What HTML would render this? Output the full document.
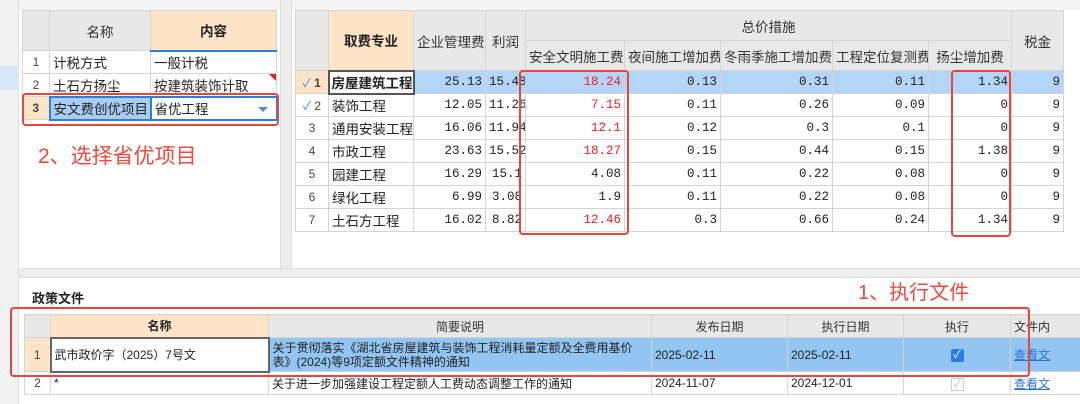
<!DOCTYPE html>
<html><head><meta charset="utf-8"><style>
*{margin:0;padding:0;box-sizing:border-box}
body{width:1080px;height:404px;overflow:hidden;background:#fff;font-family:"Liberation Sans","Noto Sans CJK SC",sans-serif;font-size:13.5px;color:#222;position:relative}
.a{position:absolute}
table{border-collapse:collapse;table-layout:fixed;position:absolute}
td{border:1px solid #d4d4d4;overflow:hidden;white-space:nowrap;padding:0 3px;height:23px}
.h{background:#e8e8e8;text-align:center;color:#333}
.p{background:#fde4c6;font-weight:bold;text-align:center}
.n{text-align:center;color:#444;font-size:12px}
.r{text-align:right;font-family:"Liberation Mono","Noto Sans CJK SC",monospace;font-size:12.5px}
.red{color:#f02020}
.sel td{background:#b4d5f7}
.box{position:absolute;border:2px solid #e8453c;border-radius:4px}
</style></head><body>
<div class="a" style="left:0;top:0;width:19px;height:404px;background:#f2f2f2;border-right:1px solid #ddd"></div>
<div class="a" style="left:0;top:66px;width:19px;height:24px;background:#d8e8fa"></div>
<div class="a" style="left:19px;top:0;width:1061px;height:10px;background:#f4f4f4"></div>
<div class="a" style="left:280px;top:0;width:12px;height:278px;background:#eeeeee;border-left:1px solid #ddd;border-right:1px solid #ddd"></div>
<div class="a" style="left:19px;top:268px;width:1061px;height:10px;background:#eeeeee;border-top:1px solid #ddd;border-bottom:1px solid #ddd"></div>

<table style="left:22px;top:10px;width:254px">
<col style="width:27px"><col style="width:101px"><col style="width:126px">
<tr style="height:40px"><td class="h">&nbsp;</td><td class="h">名称</td><td class="p" style="border-bottom:2px solid #2a7de1">内容</td></tr>
<tr><td class="n">1</td><td>计税方式</td><td>一般计税</td></tr>
<tr><td class="n">2</td><td>土石方扬尘</td><td style="position:relative">按建筑装饰计取<span class="a" style="right:0;top:0;width:0;height:0;border-left:7px solid transparent;border-top:7px solid #e02020"></span></td></tr>
<tr><td class="n" style="background:#fde4c6;font-weight:bold">3</td><td style="background:#a9cdf5;border:2px solid #2a7de1">安文费创优项目</td><td style="border:2px solid #2a7de1;position:relative">省优工程<span class="a" style="right:8px;top:9px;border-left:5px solid transparent;border-right:5px solid transparent;border-top:5px solid #5a8fc0"></span></td></tr>
</table>
<div class="box" style="left:22px;top:93px;width:257px;height:33px"></div>
<div class="a red" style="left:38px;top:140px;font-size:21px;color:#f0483c">2、选择省优项目</div>

<table style="left:295px;top:10px;width:768px">
<col style="width:33px"><col style="width:85px"><col style="width:72px"><col style="width:40px"><col style="width:99px"><col style="width:96px"><col style="width:112px"><col style="width:96px"><col style="width:83px"><col style="width:52px">
<tr style="height:30px"><td class="h" rowspan="2"></td><td class="p" rowspan="2">取费专业</td><td class="h" rowspan="2">企业管理费</td><td class="h" rowspan="2">利润</td><td class="h" colspan="5">总价措施</td><td class="h" rowspan="2">税金</td></tr>
<tr style="height:30px"><td class="h">安全文明施工费</td><td class="h">夜间施工增加费</td><td class="h">冬雨季施工增加费</td><td class="h">工程定位复测费</td><td class="h">扬尘增加费</td></tr>
<tr class="sel"><td class="n" style="background:#fde4c6"><span style="color:#3a8ee6">✓</span> <b>1</b></td><td style="background:#fff;border:2px solid #555;font-weight:bold;padding:0 2px">房屋建筑工程</td><td class="r">25.13</td><td class="r">15.48</td><td class="r red">18.24</td><td class="r">0.13</td><td class="r">0.31</td><td class="r">0.11</td><td class="r">1.34</td><td class="r">9</td></tr>
<tr><td class="n"><span style="color:#3a8ee6">✓</span> 2</td><td>装饰工程</td><td class="r">12.05</td><td class="r">11.26</td><td class="r red">7.15</td><td class="r">0.11</td><td class="r">0.26</td><td class="r">0.09</td><td class="r">0</td><td class="r">9</td></tr>
<tr><td class="n">3</td><td>通用安装工程</td><td class="r">16.06</td><td class="r">11.94</td><td class="r red">12.1</td><td class="r">0.12</td><td class="r">0.3</td><td class="r">0.1</td><td class="r">0</td><td class="r">9</td></tr>
<tr><td class="n">4</td><td>市政工程</td><td class="r">23.63</td><td class="r">15.52</td><td class="r red">18.27</td><td class="r">0.15</td><td class="r">0.44</td><td class="r">0.15</td><td class="r">1.38</td><td class="r">9</td></tr>
<tr><td class="n">5</td><td>园建工程</td><td class="r">16.29</td><td class="r">15.1</td><td class="r">4.08</td><td class="r">0.11</td><td class="r">0.22</td><td class="r">0.08</td><td class="r">0</td><td class="r">9</td></tr>
<tr><td class="n">6</td><td>绿化工程</td><td class="r">6.99</td><td class="r">3.08</td><td class="r">1.9</td><td class="r">0.11</td><td class="r">0.22</td><td class="r">0.08</td><td class="r">0</td><td class="r">9</td></tr>
<tr><td class="n">7</td><td>土石方工程</td><td class="r">16.02</td><td class="r">8.82</td><td class="r red">12.46</td><td class="r">0.3</td><td class="r">0.66</td><td class="r">0.24</td><td class="r">1.34</td><td class="r">9</td></tr>
</table>
<div class="box" style="left:519px;top:70px;width:110px;height:165px"></div>
<div class="box" style="left:951px;top:70px;width:60px;height:167px"></div>

<div class="a" style="left:32px;top:288px;font-size:13px;font-weight:bold">政策文件</div>
<div class="a" style="left:858px;top:276px;font-size:20px;color:#f0483c">1、执行文件</div>
<table style="left:24px;top:314px;width:1070px;font-size:12px">
<col style="width:26px"><col style="width:218px"><col style="width:383px"><col style="width:136px"><col style="width:116px"><col style="width:107px"><col style="width:84px">
<tr style="height:23px"><td class="h"></td><td class="p">名称</td><td class="h">简要说明</td><td class="h">发布日期</td><td class="h">执行日期</td><td class="h">执行</td><td class="h" style="text-align:left">文件内</td></tr>
<tr style="height:34px;background:#92c5f2"><td class="n" style="background:#fde4c6">1</td><td style="background:#fff;border:2px solid #666">武市政价字（2025）7号文</td><td style="white-space:normal;line-height:14px;font-size:12px">关于贯彻落实《湖北省房屋建筑与装饰工程消耗量定额及全费用基价表》(2024)等9项定额文件精神的通知</td><td>2025-02-11</td><td>2025-02-11</td><td style="text-align:center"><span style="display:inline-block;width:13px;height:13px;background:#2a7de1;color:#fff;font-size:11px;line-height:13px;border-radius:2px">✓</span></td><td style="color:#2a6fd8;text-decoration:underline">查看文</td></tr>
<tr style="height:22px"><td class="n">2</td><td>*</td><td>关于进一步加强建设工程定额人工费动态调整工作的通知</td><td>2024-11-07</td><td>2024-12-01</td><td style="text-align:center"><span style="display:inline-block;width:13px;height:13px;border:1px solid #ccc;color:#bbb;font-size:10px;line-height:11px">✓</span></td><td style="color:#2a6fd8;text-decoration:underline">查看文</td></tr>
</table>
<div class="box" style="left:10px;top:307px;width:1020px;height:70px"></div>
</body></html>
